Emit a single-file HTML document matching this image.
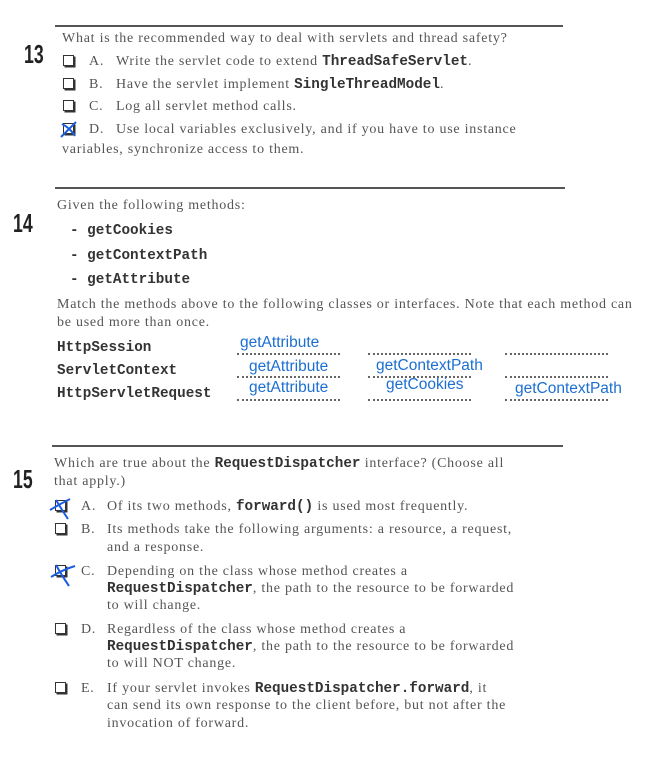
<!DOCTYPE html>
<html><head><meta charset="utf-8"><style>
body{margin:0;width:662px;height:769px;background:#fff;position:relative;overflow:hidden;font-family:"Liberation Serif",serif;color:#555;font-size:14px;letter-spacing:0.75px}
.t{position:absolute;white-space:nowrap;line-height:16px}
.m{font-family:"Liberation Mono",monospace;font-weight:bold;color:#333;font-size:14.3px;letter-spacing:0}
.hr{position:absolute;height:1.5px;background:#555}
.n{position:absolute;font-family:"Liberation Sans",sans-serif;font-size:26px;font-weight:bold;color:#222;transform:scaleX(0.68);transform-origin:left;line-height:24px;letter-spacing:0}
.cb{position:absolute;width:9px;height:9px;border:1.6px solid #333;box-shadow:1.5px 1.5px 0 #333}
.b{position:absolute;font-family:"Liberation Sans",sans-serif;color:#1c6fd1;font-size:15.5px;white-space:nowrap;line-height:16px;letter-spacing:0}
.d{position:absolute;height:0;border-top:2px dotted #666;width:103px}
</style></head><body>
<div class="hr" style="left:55px;top:25px;width:508px"></div>
<div class="n" style="left:24px;top:42px">13</div>
<div class="t" style="left:62px;top:31px">What is the recommended way to deal with servlets and thread safety?</div>
<div class="cb" style="left:63px;top:55px"></div><div class="t" style="left:89px;top:54px">A.</div><div class="t" style="left:116px;top:54px">Write the servlet code to extend <span class="m">ThreadSafeServlet</span>.</div>
<div class="cb" style="left:63px;top:78px"></div><div class="t" style="left:89px;top:77px">B.</div><div class="t" style="left:116px;top:77px">Have the servlet implement <span class="m">SingleThreadModel</span>.</div>
<div class="cb" style="left:63px;top:100px"></div><div class="t" style="left:89px;top:99px">C.</div><div class="t" style="left:116px;top:99px">Log all servlet method calls.</div>
<div class="cb" style="left:63px;top:123px"></div><div class="t" style="left:89px;top:122px">D.</div><div class="t" style="left:116px;top:122px">Use local variables exclusively, and if you have to use instance</div>
<div class="t" style="left:62px;top:142px">variables, synchronize access to them.</div>
<svg style="position:absolute;left:58px;top:118px" width="24" height="22"><path d="M3 19 L18 4 M4 6 Q12 10 17 18" stroke="#1a5de0" stroke-width="2" fill="none"/></svg>

<div class="hr" style="left:55px;top:187px;width:510px"></div>
<div class="n" style="left:13px;top:211px">14</div>
<div class="t" style="left:57px;top:198px">Given the following methods:</div>
<div class="t m" style="left:70px;top:223px">- getCookies</div>
<div class="t m" style="left:70px;top:248px">- getContextPath</div>
<div class="t m" style="left:70px;top:272px">- getAttribute</div>
<div class="t" style="left:57px;top:297px">Match the methods above to the following classes or interfaces. Note that each method can</div>
<div class="t" style="left:57px;top:315px">be used more than once.</div>
<div class="t m" style="left:57px;top:340px">HttpSession</div>
<div class="t m" style="left:57px;top:363px">ServletContext</div>
<div class="t m" style="left:57px;top:386px">HttpServletRequest</div>
<div class="d" style="left:237px;top:353px"></div><div class="d" style="left:368px;top:353px"></div><div class="d" style="left:505px;top:353px"></div>
<div class="d" style="left:237px;top:376px"></div><div class="d" style="left:368px;top:376px"></div><div class="d" style="left:505px;top:376px"></div>
<div class="d" style="left:237px;top:399px"></div><div class="d" style="left:368px;top:399px"></div><div class="d" style="left:505px;top:399px"></div>
<div class="b" style="left:240px;top:335px">getAttribute</div>
<div class="b" style="left:249px;top:359px">getAttribute</div>
<div class="b" style="left:376px;top:358px">getContextPath</div>
<div class="b" style="left:249px;top:380px">getAttribute</div>
<div class="b" style="left:386px;top:377px">getCookies</div>
<div class="b" style="left:515px;top:381px">getContextPath</div>

<div class="hr" style="left:52px;top:445px;width:511px"></div>
<div class="n" style="left:13px;top:467px">15</div>
<div class="t" style="left:54px;top:456px">Which are true about the <span class="m">RequestDispatcher</span> interface? (Choose all</div>
<div class="t" style="left:54px;top:474px">that apply.)</div>
<div class="cb" style="left:55px;top:500px"></div><div class="t" style="left:81px;top:499px">A.</div><div class="t" style="left:107px;top:499px">Of its two methods, <span class="m">forward()</span> is used most frequently.</div>
<svg style="position:absolute;left:48px;top:496px" width="26" height="26"><path d="M2 14 Q12 8 22 3 M8 4 Q14 14 20 23" stroke="#1a5de0" stroke-width="2" fill="none"/></svg>
<div class="cb" style="left:55px;top:523px"></div><div class="t" style="left:81px;top:522px">B.</div><div class="t" style="left:107px;top:522px">Its methods take the following arguments: a resource, a request,</div>
<div class="t" style="left:107px;top:540px">and a response.</div>
<div class="cb" style="left:55px;top:565px"></div><div class="t" style="left:81px;top:564px">C.</div><div class="t" style="left:107px;top:564px">Depending on the class whose method creates a</div>
<svg style="position:absolute;left:48px;top:560px" width="30" height="28"><path d="M3 17 Q14 10 27 6 M8 5 Q14 16 21 26" stroke="#1a5de0" stroke-width="2" fill="none"/></svg>
<div class="t" style="left:107px;top:581px"><span class="m">RequestDispatcher</span>, the path to the resource to be forwarded</div>
<div class="t" style="left:107px;top:598px">to will change.</div>
<div class="cb" style="left:55px;top:623px"></div><div class="t" style="left:81px;top:622px">D.</div><div class="t" style="left:107px;top:622px">Regardless of the class whose method creates a</div>
<div class="t" style="left:107px;top:639px"><span class="m">RequestDispatcher</span>, the path to the resource to be forwarded</div>
<div class="t" style="left:107px;top:656px">to will NOT change.</div>
<div class="cb" style="left:55px;top:682px"></div><div class="t" style="left:81px;top:681px">E.</div><div class="t" style="left:107px;top:681px">If your servlet invokes <span class="m">RequestDispatcher.forward</span>, it</div>
<div class="t" style="left:107px;top:698px">can send its own response to the client before, but not after the</div>
<div class="t" style="left:107px;top:716px">invocation of forward.</div>
</body></html>
